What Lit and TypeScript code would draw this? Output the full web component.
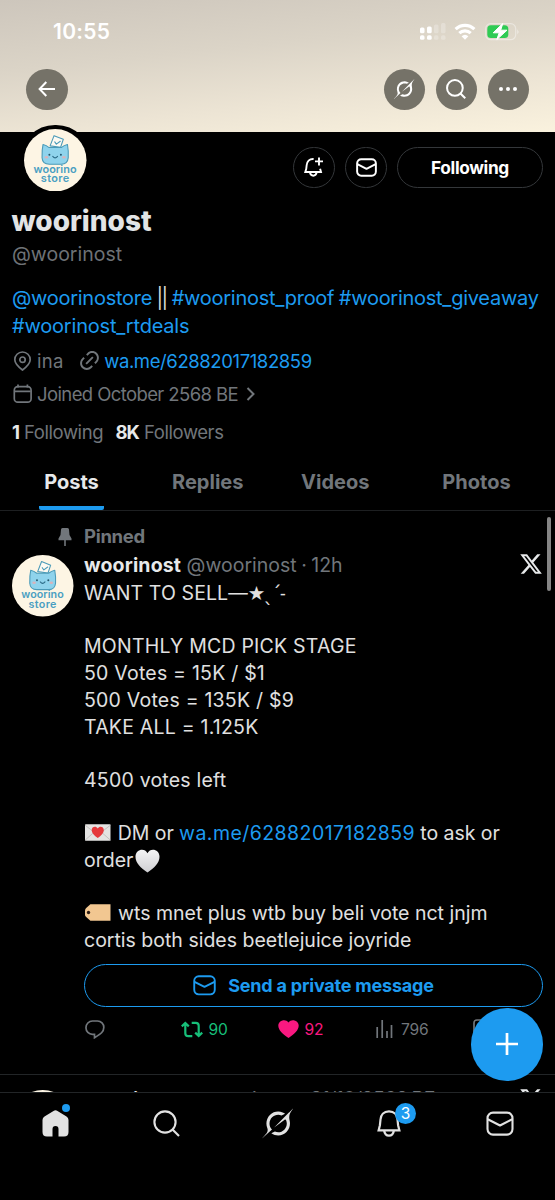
import { LitElement, html, css } from "lit";
import { customElement } from "lit/decorators.js";

const grok = (size: number) => html`<svg width=${size} height=${size * 0.97} viewBox="0 0 33 32" fill="currentColor">
  <path d="M12.745 20.54l10.97-8.19c.539-.4 1.307-.244 1.564.38 1.349 3.288.746 7.241-1.938 9.955-2.683 2.714-6.417 3.31-9.83 1.954l-3.728 1.745c5.347 3.697 11.84 2.782 15.898-1.324 3.219-3.255 4.216-7.692 3.284-11.693l.008.009c-1.351-5.878.332-8.227 3.782-13.031L33 0l-4.54 4.59v-.014L12.743 20.544m-2.263 1.987c-3.837-3.707-3.175-9.446.1-12.755 2.42-2.449 6.388-3.448 9.852-1.979l3.72-1.737c-.67-.49-1.53-1.017-2.515-1.387-4.455-1.854-9.789-.931-13.41 2.728-3.483 3.523-4.579 8.94-2.697 13.561 1.405 3.454-.899 5.898-3.22 8.364C1.49 30.2.666 31.074 0 32l10.478-9.466"/></svg>`;

const search = (size: number, sw: number) => html`<svg width=${size} height=${size} viewBox="0 0 27 27" fill="none" stroke="currentColor" stroke-width=${sw}>
  <circle cx="12" cy="12" r="10.6"/><path d="M19.5 19.5L26 26"/></svg>`;

const mail = (w: number, sw: number) => html`<svg width=${w} height=${w * 0.9} viewBox="0 0 28 25" fill="none" stroke="currentColor" stroke-width=${sw} stroke-linejoin="round">
  <rect x="1.5" y="1.5" width="25" height="22" rx="5.5"/><path d="M1.8 8.2L14 14.4l12.2-6.2"/></svg>`;

const xLogo = html`<svg width="24" height="24" viewBox="0 0 24 24" fill="#e7e9ea"><path d="M18.244 2.25h3.308l-7.227 8.26 8.502 11.24H16.17l-5.214-6.817L4.99 21.75H1.68l7.73-8.835L1.254 2.25H8.08l4.713 6.231zm-1.161 17.52h1.833L7.084 4.126H5.117z"/></svg>`;

const loveLetter = html`<svg class="emoji" width="25.500" height="17" viewBox="0 0 26 17"><rect width="26" height="17" rx=".8" fill="#e4e3e2"/><path d="M0 1l13 10L26 1M0 16.4l9-8M26 16.4l-9-8" fill="none" stroke="#b9b7b6" stroke-width=".8"/><path d="M13 14.2C9.500 11.400 6.800 9 6.800 6.100 6.800 2.600 11.200 1.500 13 4.500c1.800-3 6.200-1.900 6.200 1.600 0 2.900-2.700 5.300-6.200 8.100z" fill="#e5393c"/></svg>`;

const whiteHeart = html`<svg class="heart" width="25" height="24" viewBox="0 0 26 24"><defs><linearGradient id="wh" x2="0" y2="1"><stop stop-color="#f4f4f5"/><stop offset="1" stop-color="#cfcfd2"/></linearGradient></defs><path d="M13 24C6 19 .5 14 .5 7.500.5 0 10-2.500 13 4c3-6.500 12.500-4 12.500 3.500C25.500 14 20 19 13 24z" fill="url(#wh)"/></svg>`;

const tag = html`<svg class="emoji" width="25.500" height="17" viewBox="0 0 26 17"><path d="M5.500 0H26v17H5.500L1.200 13.200Q0 12 0 10.500V6.500Q0 5 1.200 3.800z" fill="#f2c791"/><circle cx="3.600" cy="8.500" r="1.700" fill="#2a1a12"/></svg>`;

@customElement("store-avatar")
class StoreAvatar extends LitElement {
  static styles = css`
    :host { display: block; }
    svg { display: block; width: 100%; height: 100%; }
    text { font-family: "Inter", sans-serif; font-weight: 600; fill: #4a9fc2; }
  `;
  render() {
    return html`<svg viewBox="0 0 63 63">
      <circle cx="31.500" cy="31.500" r="31.500" fill="#fdf5e4"/>
      <g stroke="#4a9ab8" stroke-width="1.100" stroke-linejoin="round" stroke-linecap="round">
        <path d="M26.300 17l4-10.300 9.300 3.700-2.700 8z" fill="#fdfaf2"/>
        <path d="M31 13l1.600 2.300 4-3" fill="none"/>
        <path d="M19.200 15.600Q22.500 16.300 25.300 18.700H37.500Q40.500 16.300 43.800 15.600 45 22 44.600 29 44 35.500 37.500 35.500H25.500Q18.600 35.500 18.200 29 18 21 19.200 15.600z" fill="#8fd3ec"/>
        <path d="M29 27.600q2.300 3 4.800 0" fill="none" stroke="#2c6b87"/>
      </g>
      <circle cx="25.600" cy="25.900" r="1" fill="#24566d"/><circle cx="37.200" cy="25.900" r="1" fill="#24566d"/>
      <ellipse cx="22.600" cy="28.500" rx="1.800" ry="1.300" fill="#d9b3bb"/><ellipse cx="40.300" cy="28.500" rx="1.800" ry="1.300" fill="#d9b3bb"/>
      <text x="9.500" y="44.500" font-size="11" textLength="43.500">woorino</text>
      <text x="17" y="53.800" font-size="11" textLength="28.500">store</text>
    </svg>`;
  }
}

@customElement("app-root")
class AppRoot extends LitElement {
  static styles = css`
    :host { display: block; font-family: "Inter", sans-serif; color: #e2e4e5; }
    * { box-sizing: border-box; }
    svg { display: block; flex: none; }
    .screen { position: relative; width: 555px; height: 1200px; background: #000; overflow: hidden; display: flex; flex-direction: column; white-space: nowrap; }
    .banner { height: 132px; flex: none; background: linear-gradient(174deg, #cdc6bc 0%, #dbd4c7 38%, #ece4d4 70%, #faf2de 100%); color: #fff; }
    .status { height: 63px; padding: 0 35px 0 53px; display: flex; align-items: center; font-size: 21px; font-weight: 600; letter-spacing: .3px; }
    .status svg { margin-left: auto; }
    .toolbar { display: flex; gap: 10.5px; padding: 5.500px 26px 0; }
    .round { width: 41.5px; height: 41.5px; border-radius: 50%; background: #757268; display: grid; place-items: center; }
    .round:first-child { margin-right: auto; }
    .head { height: 71.500px; flex: none; padding: 0 12px 0 20px; display: flex; align-items: flex-start; }
    .head store-avatar { width: 70.500px; height: 70.500px; border: 4px solid #000; border-radius: 50%; background: #000; margin-top: -7.500px; margin-right: auto; }
    .pill { height: 41.500px; margin-top: 14.500px; margin-left: 10px; border: 1.500px solid #34373a; border-radius: 21px; display: grid; place-items: center; color: #fff; }
    .sq { width: 42px; }
    .follow { width: 146px; font-size: 17.300px; font-weight: 700; letter-spacing: -0.350px; }
    .profile { padding: 0 12px; flex: none; }
    .name { font-size: 28px; font-weight: 800; line-height: 34px; letter-spacing: 0; margin-left: -.5px; }
    .handle { margin-top: 2.500px; font-size: 19.500px; line-height: 28px; color: #6e7276; }
    .bio { margin-top: 16px; font-size: 20px; line-height: 28px; letter-spacing: -0.270px; word-spacing: -.8px; color: #d9d9d9; }
    .bars { letter-spacing: -1.800px; margin-right: .8px; }
    .deals { letter-spacing: -.2px; }
    .link { color: #1d9bf0; }
    .facts { display: flex; align-items: center; height: 28px; font-size: 18.500px; color: #71767b; }
    .facts svg { margin-right: 4px; }
    .place { margin-top: 6.500px; }
    .ina { margin-right: 15.500px; letter-spacing: .3px; }
    .wa { letter-spacing: -0.400px; }
    .joined { margin-top: 5.500px; letter-spacing: -0.600px; }
    .joined .chev { margin: 0 0 0 7.500px; }
    .counts { margin-top: 9.500px; letter-spacing: -0.430px; }
    .counts b { color: #e7e9ea; margin-right: 4.500px; }
    .counts b.k { letter-spacing: -1.200px; margin-right: 5.500px; }
    .counts span { margin-right: 12.500px; }
    .tabs { height: 65px; flex: none; border-bottom: 1px solid #1d1f21; display: grid; grid-template-columns: 143px 129.500px 125.500px 157px; justify-items: center; font-size: 20px; font-weight: 700; color: #71767b; }
    .tab { height: 64px; padding-top: 23px; line-height: 26px; border-bottom: 4px solid transparent; }
    .active { color: #e7e9ea; border-color: #1d9bf0; border-radius: 2px; padding-left: 5.500px; padding-right: 5.500px; }
    .feed { flex: 1; min-height: 0; overflow: hidden; }
    .post { display: grid; grid-template-columns: 61.500px 459px; column-gap: 10.500px; padding: 0 12px; align-content: start; }
    .post1 { padding-top: 12.500px; height: 564.500px; border-bottom: 1px solid #222527; }
    .post2 { padding-top: 15px; }
    .pinicon { height: 28px; display: flex; align-items: center; justify-content: flex-end; padding-right: 0; margin-right: -1.500px; }
    .pinned { font-size: 18.500px; font-weight: 700; line-height: 27px; height: 28px; color: #71767b; letter-spacing: -0.300px; }
    .post store-avatar { width: 61.500px; height: 61.500px; margin-top: 4px; }
    .post2 store-avatar { margin-top: 0; }
    .meta { display: flex; height: 28px; line-height: 28px; font-size: 19.500px; color: #71767b; word-spacing: -1px; }
    .post2 .meta { margin-top: -4px; line-height: 27px; }
    .date { letter-spacing: -.5px; }
    .meta b { color: #e7e9ea; letter-spacing: .15px; margin-right: 5.500px; }
    .meta svg { margin: .5px 0 0 auto; }
    .text { font-size: 19.500px; line-height: 26.700px; letter-spacing: 0; white-space: pre; color: #e0e0e0; }
    .first { height: 27px; margin-top: .7px; }
    .want { letter-spacing: .1px; }
    .caps { letter-spacing: .22px; }
    .num { letter-spacing: .44px; }
    .dmline { word-spacing: -.2px; }
    .star { font-family: "DejaVu Sans", sans-serif; letter-spacing: -1.700px; line-height: 1; }
    .emoji { display: inline-block; margin: 0 2px 0 1px; vertical-align: -1px; }
    .heart { display: inline-block; margin: -5px 0 -5px 2px; vertical-align: -1px; position: relative; }
    .dm { margin-top: 10px; height: 43px; border: 1.500px solid #1d9bf0; border-radius: 22px; display: flex; align-items: center; justify-content: center; gap: 12px; color: #1d9bf0; font-size: 18px; font-weight: 700; letter-spacing: -0.210px; }
    .actions { display: grid; grid-template-columns: repeat(4, 97px) auto; height: 44.500px; align-items: center; font-size: 15.600px; letter-spacing: -.2px; color: #71767b; padding-left: .5px; }
    .act { display: flex; align-items: center; gap: 6px; }
    .views { gap: 8.500px; }
    .rt { color: #17bf79; margin-left: -1px; } .like { color: #f91880; margin-left: -1px; }
    .nav { height: 108px; flex: none; border-top: 1px solid #222527; background: #000; display: grid; grid-template-columns: repeat(5, 111px); padding: 13.500px 0 0 0; color: #e2e2e2; }
    .item { height: 34px; display: grid; place-items: center; position: relative; }
    .dot { position: absolute; left: 62px; top: -2.500px; width: 8px; height: 8px; border-radius: 50%; background: #1d9bf0; }
    .badge { position: absolute; left: 62px; top: -3.500px; width: 21px; height: 21px; border-radius: 50%; background: #1d9bf0; color: #fff; font-size: 15.500px; line-height: 21px; text-align: center; }
    .thumb { position: absolute; left: 547px; top: 517px; width: 4px; height: 74px; border-radius: 2px; background: #858585; }
    .fab { position: absolute; left: 470.500px; top: 1008px; width: 72.500px; height: 72.500px; border-radius: 50%; background: #1d9bf0; display: grid; place-items: center; }
  `;

  status() {
    return html`<div class="status">10:55
      <svg width="100" height="18" viewBox="0 0 100 18">
        <g fill="#fff"><rect x="0" y="4.500" width="4.500" height="5.800" rx="1.500"/><rect x="7" y="3.500" width="4.700" height="6.800" rx="1.500"/><rect x="0" y="12.300" width="4.500" height="4.500" rx="1.600"/><rect x="7" y="12.300" width="4.700" height="4.500" rx="1.600"/></g>
        <g fill="#fff" opacity=".25"><rect x="14" y="1.500" width="4.500" height="8.800" rx="1.500"/><rect x="21" y="0" width="4.500" height="10.300" rx="1.500"/><rect x="14" y="12.300" width="4.500" height="4.500" rx="1.600"/><rect x="21" y="12.300" width="4.500" height="4.500" rx="1.600"/></g>
        <g fill="none" stroke="#fff" stroke-width="3.100"><path d="M35.600 6.200a13.400 13.400 0 0 1 18.800 0"/><path d="M39.300 10.200a8.200 8.200 0 0 1 11.400 0"/></g>
        <path d="M45 16.800l-3.400-3.500a5 5 0 0 1 6.800 0z" fill="#fff"/>
        <rect x="65.700" y=".7" width="30" height="16" rx="5" fill="none" stroke="#fff" stroke-opacity=".4" stroke-width="1.200"/>
        <path d="M97.500 6q1.800 2.700 0 5.400z" fill="#fff" opacity=".7"/>
        <rect x="67.300" y="2.300" width="21" height="12.800" rx="3.600" fill="#2fcb54"/>
        <path d="M82.800.4L73.200 9.800h6l-2.400 6.800 10.200-9.400h-6.300z" fill="#fff" stroke="#fff" stroke-width="1" stroke-linejoin="round"/>
      </svg></div>`;
  }

  render() {
    return html`<div class="screen">
      <div class="banner">
        ${this.status()}
        <div class="toolbar">
          <div class="round"><svg width="18" height="16" viewBox="0 0 18 16" fill="none" stroke="#fff" stroke-width="2"><path d="M17 8H2M8.300 1L1.600 8l6.700 7"/></svg></div>
          <div class="round">${grok(20.5)}</div>
          <div class="round">${search(20, 2.7)}</div>
          <div class="round"><svg width="18" height="4" viewBox="0 0 18 4" fill="#fff"><circle cx="2" cy="2" r="2"/><circle cx="9" cy="2" r="2"/><circle cx="16" cy="2" r="2"/></svg></div>
        </div>
      </div>
      <div class="head">
        <store-avatar></store-avatar>
        <div class="pill sq"><svg width="20" height="20" viewBox="0 0 20 20" fill="none" stroke="#fff" stroke-width="1.900"><path d="M9.600 2C5.300 1.700 2.900 4.600 2.700 8l-.5 4-.9 3H17l-.9-3.200M5.900 15.200c.4 2.400 2 3.600 3.400 3.600s3-1.200 3.400-3.600M15 .4v8M11 4.400h8"/></svg></div>
        <div class="pill sq">${mail(21, 2.6)}</div>
        <div class="pill follow">Following</div>
      </div>
      <div class="profile">
        <div class="name">woorinost</div>
        <div class="handle">@woorinost</div>
        <div class="bio"><span class="link">@woorinostore</span> <span class="bars">||</span> <span class="link">#woorinost_proof</span> <span class="link">#woorinost_giveaway</span><br><span class="link deals">#woorinost_rtdeals</span></div>
        <div class="facts place">
          <svg width="21" height="20" viewBox="0 0 21 20" fill="none" stroke="currentColor" stroke-width="1.700"><path d="M10.500 19C6 15.500 2.800 12.500 2.800 8.700a7.700 7.700 0 0 1 15.400 0c0 3.800-3.200 6.800-7.700 10.300z"/><circle cx="10.500" cy="8.700" r="2.700"/></svg>
          <span class="ina">ina</span>
          <svg width="21" height="21" viewBox="1 1 22 22" fill="currentColor"><path d="M18.360 5.640c-1.950-1.960-5.110-1.960-7.070 0L9.880 7.050 8.460 5.640l1.420-1.420c2.730-2.730 7.160-2.730 9.900 0 2.730 2.740 2.730 7.170 0 9.900l-1.420 1.420-1.410-1.420 1.410-1.410c1.960-1.960 1.960-5.120 0-7.070zm-2.120 3.530l-7.070 7.070-1.410-1.410 7.070-7.070 1.410 1.410zm-12.020.71l1.420-1.420 1.410 1.420-1.410 1.410c-1.960 1.960-1.960 5.120 0 7.070 1.950 1.960 5.110 1.960 7.070 0l1.410-1.410 1.420 1.410-1.420 1.420c-2.730 2.730-7.160 2.730-9.900 0-2.730-2.740-2.730-7.170 0-9.900z"/></svg>
          <span class="link wa">wa.me/62882017182859</span>
        </div>
        <div class="facts joined">
          <svg width="21" height="20" viewBox="0 0 21 20" fill="none" stroke="currentColor" stroke-width="1.700"><rect x="2.300" y="2.700" width="16.800" height="15.500" rx="3.500"/><path d="M2.700 7.300h16M6 .5v3M15.400 .5v3"/></svg>
          Joined October 2568 BE
          <svg class="chev" width="9" height="14" viewBox="0 0 9 14" fill="none" stroke="currentColor" stroke-width="2"><path d="M1.500 1l6 6-6 6"/></svg>
        </div>
        <div class="facts counts"><b>1</b><span>Following</span><b class="k">8K</b><span>Followers</span></div>
      </div>
      <div class="tabs"><div class="tab active">Posts</div><div class="tab">Replies</div><div class="tab">Videos</div><div class="tab">Photos</div></div>
      <div class="feed">
        <div class="post post1">
          <div class="pinicon"><svg width="17" height="20" viewBox="0 0 17 20" fill="#71767b"><path d="M3 2.500Q3 1 4.500 1h5Q11 1 11 2.500l.5 5.500 2 3.500v1.800H7.800V19H6.200v-5.700H.5v-1.800L2.500 8z"/></svg></div>
          <div class="pinned">Pinned</div>
          <store-avatar></store-avatar>
          <div>
            <div class="meta"><b>woorinost</b><span>@woorinost · 12h</span>${xLogo}</div>
            <div class="text first"><span class="want">WANT TO SELL—</span><span class="star">★ˎˊ˗</span></div>
            <div class="text"><span class="caps">
MONTHLY MCD PICK STAGE
50 Votes = 15K / $1
500 Votes = 135K / $9
TAKE ALL = 1.125K

4500 votes left</span>

<span class="dmline">${loveLetter} DM or <span class="link num">wa.me/62882017182859</span> to ask or</span>
order${whiteHeart}

<span>${tag} wts mnet plus wtb buy beli vote nct jnjm</span>
cortis both sides beetlejuice joyride</div>
            <div class="dm">${mail(23, 2.3)}<span>Send a private message</span></div>
            <div class="actions">
              <div class="act"><svg width="20" height="19" viewBox="0 0 20 19" fill="none" stroke="currentColor" stroke-width="1.700"><path d="M7.500 1h5a6.300 6.300 0 0 1 6.300 6.500c0 5-4.300 7-9.300 10.200v-3.400h-2A6.400 6.400 0 0 1 1 7.700 6.500 6.500 0 0 1 7.500 1z"/></svg></div>
              <div class="act rt"><svg width="22" height="17" viewBox="0 0 22 17" fill="none" stroke="currentColor" stroke-width="2.200"><path d="M.8 5.400L4.300 2l3.500 3.400M4.300 2.500v9.700q0 3 3 3h4M14.200 11.600l3.500 3.400 3.500-3.400M17.700 14.500V4.800q0-3-3-3h-4"/></svg>90</div>
              <div class="act like"><svg width="21" height="18" viewBox="0 0 21 18" fill="currentColor"><path d="M10.500 18C4.500 14 .3 10 .3 5.500.3.500 7.500-2 10.500 2.500 13.500-2 20.700.5 20.700 5.500c0 4.500-4.200 8.500-10.200 12.500z"/></svg>92</div>
              <div class="act views"><svg width="17" height="18" viewBox="0 0 17 18" stroke="currentColor" stroke-width="1.700"><path d="M1.200 7v11M6.200 0v18M11 11v7M15.500 5v13"/></svg>796</div>
              <div class="act"><svg width="16" height="20" viewBox="0 0 16 20" fill="none" stroke="currentColor" stroke-width="1.700"><path d="M1 19V4q0-3 3-3h8q3 0 3 3v15l-7-5z"/></svg></div>
            </div>
          </div>
        </div>
        <div class="post post2">
          <store-avatar></store-avatar>
          <div class="meta"><b>woorinost</b><span>@woorinost <span class="date">· 31/10/2568 BE</span></span>${xLogo}</div>
        </div>
      </div>
      <div class="nav">
        <div class="item"><svg width="27" height="27" viewBox="0 0 27 27" fill="currentColor"><path d="M11.500.9q2-1.200 4 0l9 5.600q2 1.200 2 3.500v12q0 4.500-4.500 4.500h-5.500V19a3 3 0 0 0-6 0v7.500H5q-4.500 0-4.500-4.500V10q0-2.300 2-3.500z"/></svg><span class="dot"></span></div>
        <div class="item">${search(27, 2.1)}</div>
        <div class="item">${grok(31.5)}</div>
        <div class="item"><svg width="24" height="27" viewBox="0 0 24 27" fill="none" stroke="currentColor" stroke-width="2.200"><path d="M12 1.400C6.600 1.400 3.800 5 3.500 9.500l-.6 5.700-1.300 5.200h20.800l-1.300-5.200-.6-5.700C20.200 5 17.400 1.400 12 1.400zM7.100 20.500c.5 3.500 2.600 5.200 4.900 5.200s4.400-1.700 4.900-5.200"/></svg><span class="badge">3</span></div>
        <div class="item">${mail(28, 2.1)}</div>
      </div>
      <div class="thumb"></div>
      <div class="fab"><svg width="22" height="22" viewBox="0 0 22 22" stroke="#fff" stroke-width="2.700"><path d="M11 0v22M0 11h22"/></svg></div>
    </div>`;
  }
}
